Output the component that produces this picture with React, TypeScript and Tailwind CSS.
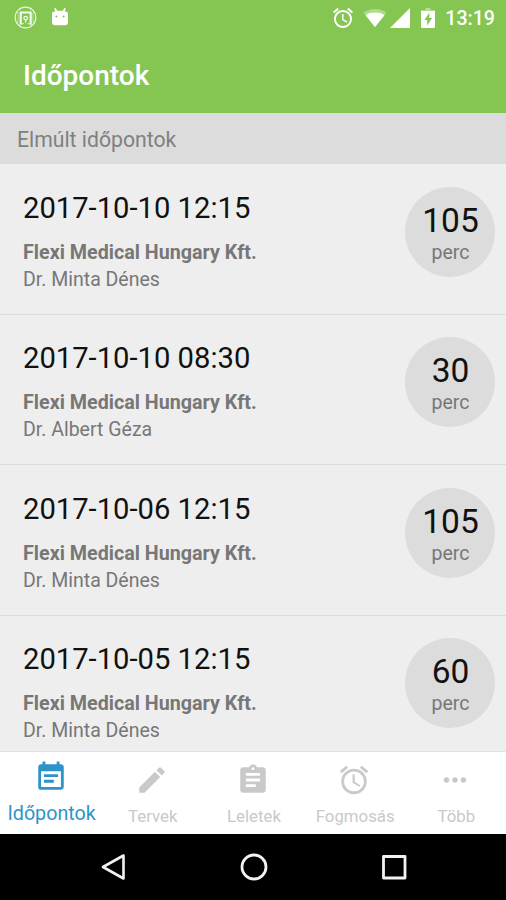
import { clsx } from "clsx";
import type { IconType } from "react-icons";
import {
  MdAccessAlarm,
  MdAssignment,
  MdEdit,
  MdEventNote,
  MdMoreHoriz,
} from "react-icons/md";

type Appointment = {
  date: string;
  clinic: string;
  doctor: string;
  minutes: number;
};

const CLINIC = "Flexi Medical Hungary Kft.";

const appointments: Appointment[] = [
  { date: "2017-10-10 12:15", clinic: CLINIC, doctor: "Dr. Minta Dénes", minutes: 105 },
  { date: "2017-10-10 08:30", clinic: CLINIC, doctor: "Dr. Albert Géza", minutes: 30 },
  { date: "2017-10-06 12:15", clinic: CLINIC, doctor: "Dr. Minta Dénes", minutes: 105 },
  { date: "2017-10-05 12:15", clinic: CLINIC, doctor: "Dr. Minta Dénes", minutes: 60 },
];

const tabs: { label: string; icon: IconType; active?: boolean }[] = [
  { label: "Időpontok", icon: MdEventNote, active: true },
  { label: "Tervek", icon: MdEdit },
  { label: "Leletek", icon: MdAssignment },
  { label: "Fogmosás", icon: MdAccessAlarm },
  { label: "Több", icon: MdMoreHoriz },
];

function StatusBar() {
  return (
    <div className="flex h-9 shrink-0 items-center pl-[14px] pr-[11px] text-white">
      <svg viewBox="0 0 24 24" className="mt-[-2px] size-[23px]" fill="none" stroke="currentColor" aria-hidden>
        <circle cx="12" cy="12" r="10.8" strokeWidth="1.2" opacity=".85" />
        <path d="M7 19.500V6.800h10.400v12.700" strokeWidth="2.200" opacity=".9" />
        <path d="M4.300 6.300v11.400M19.900 6.300v11.400" strokeWidth=".8" opacity=".6" />
        <path d="M7.500 18.500h3M14 18.500h3" strokeWidth="1" opacity=".75" />
        <circle cx="12.200" cy="12.600" r="1.900" strokeWidth="1.300" opacity=".9" />
        <path d="M12.200 14.400v2.800" strokeWidth="1.300" />
      </svg>
      <svg viewBox="0 0 18 20" className="ml-[14px] mt-[-3px] h-5 w-[18px]" fill="currentColor" aria-hidden>
        <path d="M3.200 1.400 4.400.8l1.800 3h5.600l1.800-3 1.200.6-1.200 2.900c2 .2 3.400 1 3.400 2.700v8.600c0 1.700-1 2.600-2.800 2.600H3.800C2 18.200 1 17.300 1 15.600V7c0-1.700 1.400-2.500 3.400-2.700z" />
        <circle cx="5.400" cy="9.600" r="1" fill="#84c651" />
        <circle cx="12.600" cy="9.600" r="1" fill="#84c651" />
      </svg>

      <MdAccessAlarm className="ml-auto size-6" />
      <svg viewBox="0 0 24 20" className="ml-[8px] h-5 w-6" fill="currentColor" aria-hidden>
        <path d="M12 19 .5 4.600C3.500 2.200 7.500 1 12 1s8.500 1.200 11.500 3.600z" opacity=".35" />
        <path d="M12 19 2.500 7.200c2.700-1.900 5.500-2.600 9.500-2.600s6.800.7 9.500 2.600z" />
      </svg>
      <svg viewBox="0 0 20 20" className="ml-[3px] size-5" fill="currentColor" aria-hidden>
        <path d="M20 0v20H0z" />
      </svg>
      <svg viewBox="0 0 14 20" className="ml-[11px] h-5 w-[14px]" fill="currentColor" aria-hidden>
        <path d="M4.500 0h5v2H14v4H0V2h4.500z" opacity=".4" />
        <path fillRule="evenodd" d="M0 3h14v15.500a1.500 1.500 0 0 1-1.500 1.500h-11A1.500 1.500 0 0 1 0 18.500zM8.300 4.500 3.500 12h2.700v5.500l4.800-7.600H8.300z" />
      </svg>
      <span className="ml-[10px] pt-[2px] text-[19.600px] font-medium leading-none">13:19</span>
    </div>
  );
}

function AppointmentRow({ date, clinic, doctor, minutes }: Appointment) {
  return (
    <li className="flex h-[150.400px] shrink-0 items-start justify-between border-b-[1.400px] border-[#dcdcdc] pl-[23px] pr-[11px] pt-[22.500px]">
      <div className="pt-[3px]">
        <p className="text-[29.200px] leading-[36px] text-[#111]">{date}</p>
        <p className="mt-[13px] text-[19.700px] font-bold leading-[27px] text-[#777]">{clinic}</p>
        <p className="text-[19.500px] leading-[27px] text-[#777]">{doctor}</p>
      </div>
      <div className="flex size-[90px] flex-col items-center rounded-full bg-[#dcdcdc] pl-px pt-[14px]">
        <span className="text-[33.500px] leading-[40px] text-[#111]">{minutes}</span>
        <span className="text-[19.500px] leading-[23px] text-[#777]">perc</span>
      </div>
    </li>
  );
}

function TabBar() {
  return (
    <nav className="grid h-[83px] shrink-0 grid-cols-5 border-t border-[#e2e2e2] bg-white">
      {tabs.map(({ label, icon: Icon, active }) => (
        <a
          key={label}
          className={clsx(
            "flex flex-col items-center whitespace-nowrap",
            active ? "pt-[8px] text-[#2e93c8]" : "pt-[11px] text-[#c9c9c9]",
          )}
        >
          <Icon className="size-[34px]" />
          <span
            className={clsx(
              "pl-[2px]",
              active ? "mt-[7px] text-[19.700px] leading-[26px]" : "mt-[8px] text-[16.800px] leading-[22px]",
            )}
          >
            {label}
          </span>
        </a>
      ))}
    </nav>
  );
}

function SystemNav() {
  return (
    <div className="flex h-[66px] shrink-0 items-center justify-between bg-black pl-[99px] pr-[98px] text-[#f2f2f2]">
      <svg viewBox="0 0 28 28" className="size-7" fill="none" stroke="currentColor" strokeWidth="2.600" strokeLinejoin="round" aria-hidden>
        <path d="M24.500 2.500v23L4 14z" />
      </svg>
      <svg viewBox="0 0 28 28" className="size-7" fill="none" stroke="currentColor" strokeWidth="2.800" aria-hidden>
        <circle cx="14" cy="14" r="12" />
      </svg>
      <svg viewBox="0 0 28 28" className="size-7" fill="none" stroke="currentColor" strokeWidth="2.800" strokeLinejoin="round" aria-hidden>
        <path d="M3.500 3.500h21.500v21.500H3.500z" />
      </svg>
    </div>
  );
}

export default function App() {
  return (
    <div className="flex h-[900px] w-[506px] flex-col overflow-hidden bg-[#eee] font-[Roboto,sans-serif]">
      <header className="flex h-[113px] shrink-0 flex-col bg-[#84c651]">
        <StatusBar />
        <h1 className="pl-[23px] pt-[23px] text-[28px] font-medium leading-[34px] text-white">Időpontok</h1>
      </header>
      <h2 className="flex h-[51px] shrink-0 items-center bg-[#dcdcdc] pl-[17px] pt-[2px] text-[21.200px] text-[#808080]">
        Elmúlt időpontok
      </h2>
      <ul className="flex min-h-0 flex-1 flex-col overflow-hidden pt-[0.500px]">
        {appointments.map((appointment) => (
          <AppointmentRow key={appointment.date} {...appointment} />
        ))}
      </ul>
      <TabBar />
      <SystemNav />
    </div>
  );
}
